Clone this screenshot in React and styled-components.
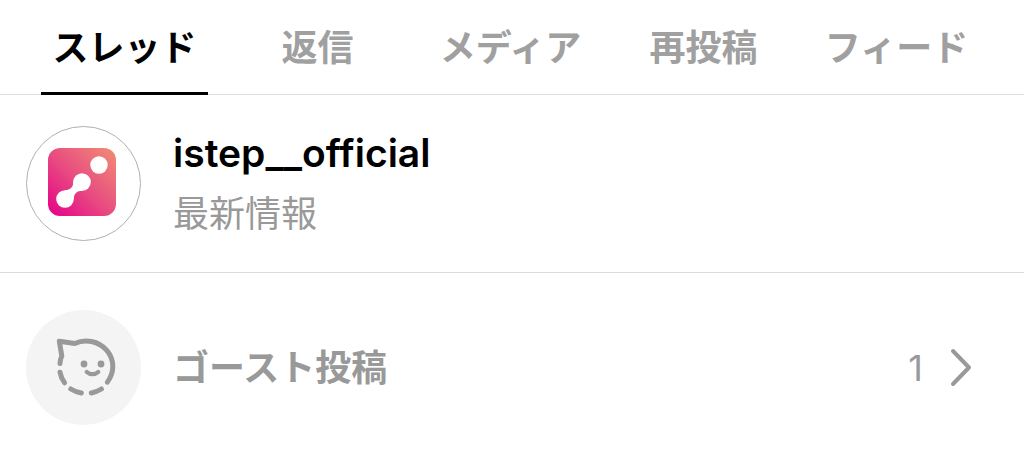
import { useState } from "react";
import styled, { createGlobalStyle } from "styled-components";

const tabs = ["スレッド", "返信", "メディア", "再投稿", "フィード"];

const App = () => {
    const [activeTab, setActiveTab] = useState(tabs[0]);

    return (
        <>
            <GlobalStyle />
            <Tabs>
                {tabs.map((tab) => (
                    <TabCell key={tab}>
                        <Tab type="button" $active={tab === activeTab} onClick={() => setActiveTab(tab)}>
                            {tab}
                        </Tab>
                    </TabCell>
                ))}
            </Tabs>
            <main>
                <ProfileRow href="#latest">
                    <Avatar $outlined>
                        <LogoIcon />
                    </Avatar>
                    <Info>
                        <Name>istep__official</Name>
                        <Description>最新情報</Description>
                    </Info>
                </ProfileRow>
                <GhostRow href="#ghost">
                    <Avatar>
                        <GhostIcon />
                    </Avatar>
                    <GhostTitle>ゴースト投稿</GhostTitle>
                    <Count>1</Count>
                    <ChevronIcon />
                </GhostRow>
            </main>
        </>
    );
};

const LogoIcon = () => (
    <svg width="71" height="71" viewBox="0 0 71 71" aria-hidden="true">
        <defs>
            <linearGradient id="logoFill" x1="0" y1="1" x2="1" y2="0">
                <stop offset="0" stopColor="#e4008a" />
                <stop offset="0.5" stopColor="#e84f80" />
                <stop offset="1" stopColor="#f18d74" />
            </linearGradient>
        </defs>
        <rect width="68" height="68" rx="12" fill="url(#logoFill)" />
        <circle cx="51" cy="17" r="8.7" fill="#fff" />
        <circle cx="34" cy="34" r="8.8" fill="#fff" />
        <circle cx="17" cy="51" r="8.8" fill="#fff" />
        <path d="M25.3 33 C25.6 39 22.5 42.3 16.5 42.2 L25.8 51.5 C25.7 46 28.8 42.6 35 42.8 Z" fill="#fff" />
    </svg>
);

const GhostIcon = () => (
    <svg width="68" height="68" viewBox="1 10 68 68" fill="none" stroke="#999" strokeWidth="5" strokeLinecap="round" strokeLinejoin="round" aria-hidden="true">
        <path d="M11 39.5 C11 36.5 11.6 34.5 12.8 32 L10.3 17.2 L25.8 19.5 C31 17 37 16.3 42.5 17.5 C55 20 63.8 30.5 63.8 42.5 C63.8 48.5 61.5 53.8 58.4 58.1" />
        <path d="M11 48.3 C11.7 52.3 13.2 55.7 15.6 58.8" />
        <path d="M21.8 65 C25 67 28.5 68.4 32.3 69" />
        <path d="M42.3 69 C46 68.4 49.2 67 52.4 65" />
        <circle cx="35" cy="40" r="3.4" fill="#999" stroke="none" />
        <circle cx="52" cy="40" r="3.4" fill="#999" stroke="none" />
        <path d="M37.8 48 C40.8 50.8 46.2 50.8 49.2 48" strokeWidth="4.4" />
    </svg>
);

const ChevronIcon = () => (
    <svg width="24" height="40" viewBox="0 0 24 40" fill="none" stroke="#999" strokeWidth="4" strokeLinecap="round" strokeLinejoin="round" aria-hidden="true">
        <path d="M4 3 L20 19.5 L4 36" />
    </svg>
);

const GlobalStyle = createGlobalStyle`
* {
    box-sizing : border-box;
}
body {
    margin : 0;
    background : #fff;
    color : #000;
    font-family : Inter, "Noto Sans CJK JP", sans-serif;
    font-size : 36px;
    line-height : 48px;
}
`
const Tabs = styled.nav`
display : flex;
padding : 0 31px 0 28px;
border-bottom : 1px solid #dcdcdc;
`
const TabCell = styled.div`
flex : 1;
display : flex;
justify-content : center;
padding : 0 13px;
margin-bottom : -1px;
`
const Tab = styled.button`
flex : 1;
padding : 24px 0 20px;
border : 0;
border-bottom : 3px solid ${(props) => (props.$active ? "#000" : "transparent")};
background : none;
color : ${(props) => (props.$active ? "#000" : "#a0a0a0")};
font : inherit;
font-weight : 600;
white-space : nowrap;
cursor : pointer;
`
const Row = styled.a`
display : flex;
align-items : center;
color : #999;
text-decoration : none;
`
const ProfileRow = styled(Row)`
padding : 31px 26px;
border-bottom : 1px solid #dcdcdc;
`
const GhostRow = styled(Row)`
padding : 37px 51px 24px 26px;
`
const Avatar = styled.div`
display : flex;
flex-shrink : 0;
align-items : center;
justify-content : center;
width : 115px;
height : 115px;
margin-right : 32px;
border : ${(props) => (props.$outlined ? "1px solid #b0b0b0" : "0")};
border-radius : 50%;
background : ${(props) => (props.$outlined ? "#fff" : "#f4f4f4")};
`
const Info = styled.div`
display : flex;
flex-direction : column;
gap : 13px;
`
const Name = styled.div`
color : #000;
font-size : 39px;
font-weight : 600;
`
const Description = styled.div`
color : #999;
`
const GhostTitle = styled.div`
flex : 1;
font-weight : 600;
`
const Count = styled.div`
margin-right : 26px;
`

export default App
